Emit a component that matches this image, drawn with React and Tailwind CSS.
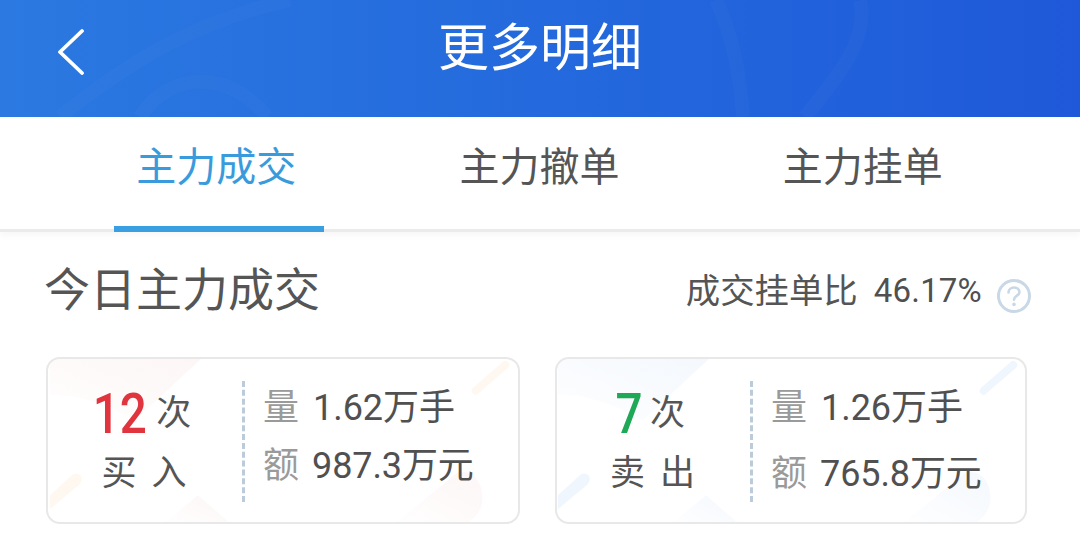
import React from "react";

const cjk = "font-['Roboto','Noto_Sans_CJK_SC',sans-serif]";

const Decor = ({ id, tint, accent }) => (
  <svg className="absolute inset-0 h-full w-full" viewBox="0 0 472 165" fill="none">
    <defs>
      <linearGradient id={id} x1="1" y1="0" x2="0" y2="1">
        <stop offset="0" stopColor={tint} />
        <stop offset="1" stopColor={tint} stopOpacity="0.1" />
      </linearGradient>
    </defs>
    <path d="M0 0H153L86 62Q40 36 0 36Z" fill={`url(#${id})`} />
    <path d="M0 138L22 118Q27 114 31 118Q34 122 30 127L0 152Z" fill={accent} />
    <path d="M431 32L461 6" stroke={accent} strokeWidth="8" strokeLinecap="round" />
    <path d="M117 165L150 138L181 165Z" fill={`url(#${id})`} />
    <path d="M351 165L414 114Q436 114 438 140Q438 156 424 165Z" fill={`url(#${id})`} />
  </svg>
);

const Card = ({ id, count, countColor, countClass, countRow, unitGap, label, volume, amount, tint, accent, leftWidth, rowsClass, className }) => (
  <div className={`relative h-[167px] overflow-hidden rounded-[14px] border-2 border-[#e8e8e8] bg-white ${className}`}>
    <Decor id={id} tint={tint} accent={accent} />
    <div className="relative flex h-full items-center pt-px">
      <div className={`flex flex-col items-center ${leftWidth}`}>
        <div className={`flex h-[58px] items-center ${countRow}`}>
          <span className={`inline-block origin-center scale-x-[0.85] text-[56px] leading-none font-medium ${countColor} ${countClass}`}>{count}</span>
          <span className={`text-[35px] leading-none text-[#555555] ${unitGap}`}>次</span>
        </div>
        <div className="mt-[7px] flex h-[48px] items-center gap-[15px] pr-[2px] text-[35px] leading-none text-[#555555]">
          <span>{label[0]}</span>
          <span>{label[1]}</span>
        </div>
      </div>
      <div className="h-[121px] border-l-[3px] border-dashed border-[#bccbd9]" />
      <div className={`ml-[18px] flex flex-col ${rowsClass}`}>
        <div className="flex h-[50px] items-center gap-[14px] text-[36px] leading-none">
          <span className="text-[#9a9a9a]">量</span>
          <span className="tracking-[-0.05px] text-[#505050]">{volume}</span>
        </div>
        <div className="flex h-[50px] items-center gap-[13px] text-[36px] leading-none">
          <span className="tracking-normal text-[#9a9a9a]">额</span>
          <span className="tracking-[-0.1px] text-[#505050]">{amount}</span>
        </div>
      </div>
    </div>
  </div>
);

export default function App() {
  return (
    <div className={`h-[551px] w-[1080px] overflow-hidden bg-white ${cjk}`}>
      {/* Header */}
      <header className="relative flex h-[117px] items-center justify-center bg-gradient-to-r from-[#2b79e1] to-[#1f59d9]">
        <svg className="absolute inset-0 h-full w-full" viewBox="0 0 1080 117" fill="none" stroke="#ffffff" strokeOpacity="0.02" strokeWidth="14">
          <path d="M60 117C130 60 200 20 290 0" />
          <path d="M140 117C170 70 230 70 267 117" />
          <path d="M716 0C735 40 740 80 743 117" />
          <path d="M860 0C870 40 835 80 805 117" />
        </svg>
        <svg className="absolute top-[28px] left-[57px]" width="28" height="47" viewBox="0 0 28 47" fill="none">
          <path d="M25 3L3 24L25 45" stroke="#ffffff" strokeWidth="3.8" strokeLinecap="round" strokeLinejoin="round" />
        </svg>
        <h1 className="relative -mt-[20px] text-[51px] leading-none font-normal text-white">更多明细</h1>
      </header>

      {/* Tabs */}
      <nav className="relative grid h-[115px] grid-cols-3 border-b-[3px] border-[#ebebeb] px-[55px] shadow-[0_4px_6px_rgba(0,0,0,0.03)]">
        <div className="relative flex justify-center pt-[31px]">
          <span className="-ml-[1px] text-[40px] leading-none whitespace-nowrap text-[#3a9bdc]">主力成交</span>
          <div className="absolute bottom-[-3px] left-[59px] h-[6px] w-[210px] bg-[#3a9fe0]" />
        </div>
        <div className="flex justify-center pt-[31px]">
          <span className="-ml-[1px] text-[40px] leading-none text-[#555555]">主力撤单</span>
        </div>
        <div className="flex justify-center pt-[31px]">
          <span className="-ml-[1px] text-[40px] leading-none text-[#555555]">主力挂单</span>
        </div>
      </nav>

      {/* Summary heading */}
      <section className="flex items-start justify-between pt-[32px] pr-[48px] pl-[44px]">
        <h2 className="text-[46px] leading-[52px] font-normal text-[#555555]">今日主力成交</h2>
        <div className="mt-[10px] flex items-start">
          <span className="text-[34.4px] leading-none text-[#555555]">成交挂单比</span>
          <span className="ml-[16px] text-[33px] leading-none tracking-[0.2px] text-[#505050]">46.17%</span>
          <svg className="mt-[4px] ml-[14px]" width="36" height="36" viewBox="0 0 36 36" fill="none">
            <circle cx="18" cy="18" r="15.5" stroke="#c9d8e6" strokeWidth="3" />
            <path d="M12.5 14.5C12.5 11.5 15 9.5 18 9.5C21 9.5 23.5 11.5 23.5 14.2C23.5 17.6 18 17.8 18 21.8" stroke="#c9d8e6" strokeWidth="2.6" strokeLinecap="round" />
            <circle cx="18" cy="26.4" r="1.8" fill="#c9d8e6" />
          </svg>
        </div>
      </section>

      {/* Cards */}
      <section className="mt-[41px] flex gap-[35px] pl-[46px]">
        <Card id="buy" className="w-[474px]" count="12" countColor="text-[#e0343e]" countClass="-mx-[5px]" countRow="pr-[6px]" unitGap="ml-[10px]" label="买入" volume="1.62万手" amount="987.3万元" tint="#fdf6f6" accent="#fef8f1" leftWidth="w-[194px]" rowsClass="-mt-[8px] gap-[8px]" />
        <Card id="sell" className="w-[472px]" count="7" countColor="text-[#1fa855]" countClass="-mx-[2px]" countRow="pr-[7px]" unitGap="ml-[7px]" label="卖出" volume="1.26万手" amount="765.8万元" tint="#f4f8fd" accent="#f0f6fd" leftWidth="w-[193px]" rowsClass="gap-[16px]" />
      </section>
    </div>
  );
}
